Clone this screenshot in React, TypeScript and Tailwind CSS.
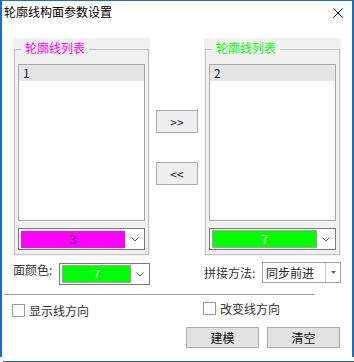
import type { ReactNode } from "react";

function Chevron() {
  return (
    <svg width="8" height="5" viewBox="0 0 8 5" fill="none">
      <path d="M0.5 0.5 L4 4 L7.5 0.5" stroke="#5a5a5a" strokeWidth="1" />
    </svg>
  );
}

function ColorCombo({ swatch, children }: { swatch: ReactNode; children?: ReactNode }) {
  return (
    <div className="h-[22px] border border-[#7a7a7a] bg-white flex items-center pl-[2px]">
      {swatch}
      <div className="flex-1 flex justify-center">
        <Chevron />
      </div>
      {children}
    </div>
  );
}

function Panel({
  title,
  titleClass,
  item,
  swatch,
}: {
  title: string;
  titleClass: string;
  item: string;
  swatch: ReactNode;
}) {
  return (
    <div className="w-[137px] h-[218px] bg-[#f0f0f0] px-px pt-[11px] pb-px flex">
      <div className="relative flex-1 border border-[#c2c2c2] px-[3px] flex flex-col">
        <span className={`absolute left-[6px] top-[-10px] px-[4px] bg-[#f0f0f0] text-[12px] leading-[16px] ${titleClass}`}>
          {title}
        </span>
        <div className="mt-[14px] h-[157px] border border-[#a8a8a8] bg-white">
          <div className="h-[16px] bg-[#e5e5e5] pl-[4px] text-[12px] leading-[16px] text-[#1c1c3a]">{item}</div>
        </div>
        <div className="mt-[7px]">
          <ColorCombo swatch={swatch} />
        </div>
      </div>
    </div>
  );
}

function MoveButton({ label }: { label: string }) {
  return (
    <button className="w-[42px] h-[23px] border border-[#adadad] bg-[#eeeeee] text-[12px] leading-[16px] text-[#2a2a3a] flex items-center justify-center">
      {label}
    </button>
  );
}

function Check({ label }: { label: string }) {
  return (
    <label className="flex items-center h-[13px] gap-[4px] text-[12px] leading-[16px] text-[#333]">
      <span className="w-[13px] h-[13px] border border-[#9a9a9a] bg-white" />
      <span>{label}</span>
    </label>
  );
}

export default function App() {
  return (
    <div className="w-[354px] h-[362px] bg-white font-['Noto_Sans_CJK_SC','Noto_Sans',sans-serif] flex flex-col">
      <div className="h-[357px] border-t border-x-2 border-[#1a6fbe] flex flex-col">
        {/* title bar */}
        <div className="h-[25px] flex items-start pl-[2px] pr-[9px]">
          <span className="pt-[3px] text-[12px] leading-[16px] text-black">轮廓线构面参数设置</span>
          <svg className="ml-auto mt-[7px]" width="10" height="10" viewBox="0 0 10 10">
            <path d="M0.5 0.5 L9.5 9.5 M9.5 0.5 L0.5 9.5" stroke="#111" strokeWidth="1" />
          </svg>
        </div>

        {/* lists */}
        <div className="mt-[12px] ml-[11px] flex">
          <Panel
            title="轮廓线列表"
            titleClass="text-[#ff00ff]"
            item="1"
            swatch={
              <div className="w-[104px] h-[17px] bg-[#ff00ff] flex items-center justify-center text-[12px] leading-[16px] text-[#3a0048]">
                3
              </div>
            }
          />
          <div className="w-[54px] flex flex-col items-center pt-[72px]">
            <MoveButton label=">>" />
            <div className="mt-[29px]">
              <MoveButton label="<<" />
            </div>
          </div>
          <Panel
            title="轮廓线列表"
            titleClass="text-[#00ff00]"
            item="2"
            swatch={
              <div className="w-[105px] h-[18px] bg-[#00ff00] border border-[#a0a0a0] flex items-center justify-center text-[12px] leading-[16px] text-white">
                7
              </div>
            }
          />
        </div>

        {/* face colour & join method */}
        <div className="mt-[6px] ml-[11px] h-[23px] flex items-start">
          <div className="w-[137px] flex items-start">
            <span className="w-[46px] text-[12px] leading-[16px] text-[#333]">面颜色:</span>
            <div className="w-[91px] mt-px">
              <ColorCombo
                swatch={
                  <div className="w-[69px] h-[18px] bg-[#00ff00] border border-[#a0a0a0] flex items-center justify-center text-[12px] leading-[16px] text-white">
                    7
                  </div>
                }
              />
            </div>
          </div>
          <div className="ml-[54px] w-[137px] flex items-start">
            <span className="w-[58px] mt-[3px] text-[12px] leading-[16px] text-[#333]">拼接方法:</span>
            <div className="w-[79px] h-[21px] border border-[#a6a6a6] bg-white flex">
              <span className="flex-1 pl-[3px] text-[12px] leading-[19px] text-[#222]">同步前进</span>
              <div className="w-[15px] border-l border-[#c8c8c8] flex items-center justify-center">
                <svg width="5" height="3" viewBox="0 0 5 3">
                  <path d="M0 0 L5 0 L2.5 3 Z" fill="#606060" />
                </svg>
              </div>
            </div>
          </div>
        </div>

        <div className="mt-[9px] ml-[2px] w-[311px] h-px bg-[#a0a0a0]" />

        {/* options & actions */}
        <div className="flex">
          <div className="ml-[10px] mt-[9px]">
            <Check label="显示线方向" />
          </div>
          <div className="ml-auto mr-[12px] w-[154px] flex flex-col">
            <div className="ml-[17px] mt-[7px]">
              <Check label="改变线方向" />
            </div>
            <div className="mt-[12px] flex gap-[8px]">
              <button className="w-[73px] h-[21px] border border-[#adadad] bg-[#e1e1e1] text-[12px] leading-[16px] text-[#111]">
                建模
              </button>
              <button className="w-[73px] h-[21px] border border-[#adadad] bg-[#e1e1e1] text-[12px] leading-[16px] text-[#111]">
                清空
              </button>
            </div>
          </div>
        </div>
      </div>
      <div className="mt-[4px] ml-[3px] h-px bg-[#1a6fbe]" />
    </div>
  );
}
